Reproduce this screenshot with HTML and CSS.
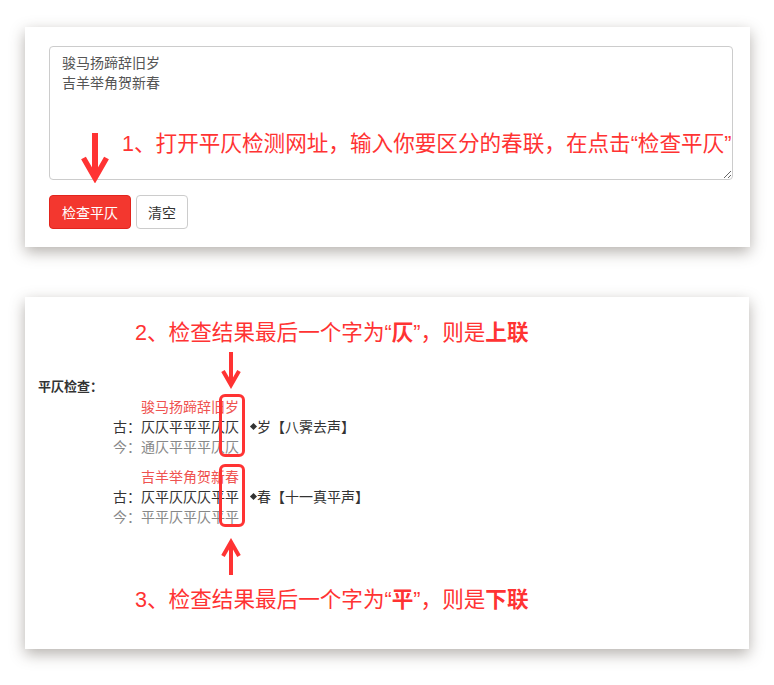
FILE: index.html
```html
<!DOCTYPE html>
<html lang="zh-CN">

<head>
    <meta charset="UTF-8">
    <meta name="viewport" content="width=device-width, initial-scale=1.0">
    <title>平仄检测</title>
    <link rel="stylesheet" href="styles.css">
</head>

<body>
    <!-- 输入区 -->
    <div class="card input-card">
        <div class="editor">
            <textarea class="verse-input">骏马扬蹄辞旧岁
吉羊举角贺新春</textarea>
            <div class="note note-1">1、打开平仄检测网址，输入你要区分的春联，在点击“检查平仄”</div>
            <svg class="arrow arrow-1" width="28" height="50" viewBox="0 0 28 50">
                <path d="M14 0 V44" stroke="#f33" stroke-width="6" fill="none" />
                <path d="M2.5 25 L14 45 L25.5 25" stroke="#f33" stroke-width="5.5" fill="none" stroke-linejoin="miter" stroke-miterlimit="10" />
            </svg>
        </div>
        <div class="actions">
            <button class="btn btn-check" type="button">检查平仄</button>
            <button class="btn btn-clear" type="button">清空</button>
        </div>
    </div>

    <!-- 检查结果 -->
    <div class="card result-card">
        <div class="note note-2">2、检查结果最后一个字为“<b>仄</b>”，则是<b>上联</b></div>
        <svg class="arrow arrow-2" width="20" height="37" viewBox="0 0 20 37">
            <path d="M10 0 V32" stroke="#f33" stroke-width="4" fill="none" />
            <path d="M2 19 L10 33 L18 19" stroke="#f33" stroke-width="4" fill="none" stroke-linejoin="miter" stroke-miterlimit="10" />
        </svg>
        <div class="result-title">平仄检查：</div>
        <div class="poem">
            <div class="stanza">
                <div class="verse">骏马扬蹄辞旧岁</div>
                <div class="old">古：仄仄平平平仄仄<span class="rhyme"><i class="dot"></i>岁【八霁去声】</span></div>
                <div class="new">今：通仄平平平仄仄</div>
            </div>
            <div class="stanza">
                <div class="verse">吉羊举角贺新春</div>
                <div class="old">古：仄平仄仄仄平平<span class="rhyme"><i class="dot"></i>春【十一真平声】</span></div>
                <div class="new">今：平平仄平仄平平</div>
            </div>
            <span class="mark mark-1"></span>
            <span class="mark mark-2"></span>
        </div>
        <svg class="arrow arrow-3" width="20" height="37" viewBox="0 0 20 37">
            <path d="M10 37 V5" stroke="#f33" stroke-width="4" fill="none" />
            <path d="M2 18 L10 4 L18 18" stroke="#f33" stroke-width="4" fill="none" stroke-linejoin="miter" stroke-miterlimit="10" />
        </svg>
        <div class="note note-3">3、检查结果最后一个字为“<b>平</b>”，则是<b>下联</b></div>
    </div>
</body>

</html>
```

FILE: styles.css
```css
* {
    margin: 0;
    padding: 0;
    box-sizing: border-box;
}

body {
    font-family: "Liberation Sans", "Noto Sans CJK SC", sans-serif;
    font-size: 14px;
    color: #333;
    background-color: #fff;
    padding: 27px 0 30px 25px;
}

.card {
    background-color: #fff;
    box-shadow: 0 5px 14px rgba(70, 60, 50, 0.4);
    position: relative;
}

/* 输入区 */
.input-card {
    width: 725px;
    padding: 19px 17px 18px 24px;
}

.editor {
    position: relative;
}

.verse-input {
    display: block;
    width: 684px;
    height: 134px;
    padding: 6px 12px;
    font-family: "Liberation Sans", "Noto Sans CJK SC", sans-serif;
    font-size: 14px;
    line-height: 20px;
    color: #555;
    border: 1px solid #ccc;
    border-radius: 4px;
    outline: none;
}

.note {
    font-size: 21.6px;
    line-height: 30px;
    color: #f33;
    white-space: nowrap;
}

.note b {
    font-weight: bold;
}

.note-1 {
    position: absolute;
    left: 73px;
    top: 83px;
}

.arrow {
    display: block;
}

.arrow-1 {
    position: absolute;
    left: 32px;
    top: 87px;
}

.actions {
    display: flex;
    gap: 5px;
    margin-top: 15px;
}

.btn {
    height: 34px;
    padding: 0 12px;
    font-family: "Liberation Sans", "Noto Sans CJK SC", sans-serif;
    font-size: 14px;
    border-radius: 4px;
    cursor: pointer;
}

.btn-check {
    color: #fff;
    background-color: #f3372f;
    border: 1px solid #e2241d;
}

.btn-clear {
    color: #333;
    background-color: #fff;
    border: 1px solid #ccc;
    padding: 0 11px;
}

/* 检查结果 */
.result-card {
    width: 724px;
    margin-top: 50px;
    padding: 21px 0 34px 13px;
}

.note-2 {
    margin-left: 97px;
}

.arrow-2 {
    position: absolute;
    left: 196px;
    top: 55px;
}

.result-title {
    margin-top: 29px;
    font-size: 13px;
    line-height: 20px;
    font-weight: bold;
    color: #333;
}

.poem {
    margin-left: 75px;
    position: relative;
    line-height: 20px;
}

.stanza+.stanza {
    margin-top: 10px;
}

.verse {
    padding-left: 28px;
    color: #ef5350;
}

.old {
    color: #333;
}

.new {
    color: #888;
}

.rhyme {
    margin-left: 12px;
}

.dot {
    display: inline-block;
    width: 5px;
    height: 5px;
    background-color: #333;
    transform: rotate(45deg);
    vertical-align: middle;
    margin: 0 1px 3px 0;
}

.mark {
    position: absolute;
    left: 106px;
    width: 26px;
    height: 63px;
    border: 3px solid #f33;
    border-radius: 6px;
}

.mark-1 {
    top: -3px;
}

.mark-2 {
    top: 67px;
}

.arrow-3 {
    margin: 11px 0 0 183px;
}

.note-3 {
    margin: 10px 0 0 97px;
}
```
